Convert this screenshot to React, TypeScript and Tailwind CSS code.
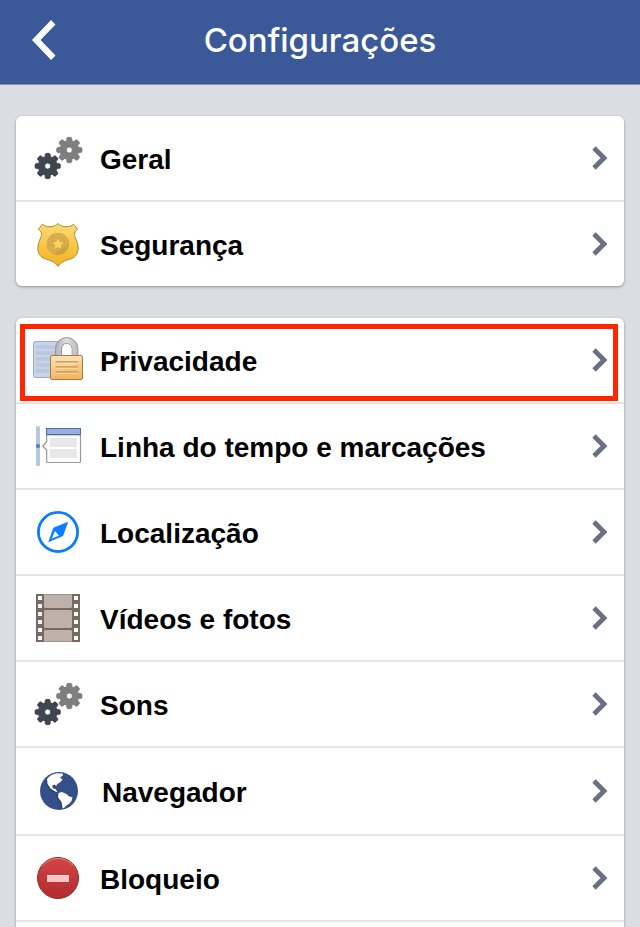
import type { ReactNode } from 'react'

interface SettingsItem {
  id: string
  label: string
  icon: ReactNode
  highlighted?: boolean
  wide?: boolean
}

const TEETH = [0, 45, 90, 135, 180, 225, 270, 315]

function Gear({ cx, cy, fill, edge }: { cx: number; cy: number; fill: string; edge: string }) {
  return (
    <g transform={`translate(${cx} ${cy})`}>
      {TEETH.map((a) => (
        <rect key={a} x="-2.600" y="-12.700" width="5.200" height="7" rx="1.600" fill={fill} stroke={edge} strokeWidth="0.600" transform={`rotate(${a})`} />
      ))}
      <circle r="6.500" fill="none" stroke={fill} strokeWidth="6.800" />
      <circle r="3.100" fill="none" stroke={edge} strokeWidth="0.800" />
    </g>
  )
}

function GearsIcon() {
  return (
    <svg viewBox="0 0 50 50" className="size-[50px]" aria-hidden="true">
      <Gear cx={36.3} cy={17} fill="#7f7f7f" edge="#666666" />
      <Gear cx={14.7} cy={33} fill="#3f4652" edge="#2b3039" />
    </svg>
  )
}

function BadgeIcon() {
  return (
    <svg viewBox="0 0 50 50" className="size-[50px]" aria-hidden="true">
      <defs>
        <linearGradient id="badge" x1="0" y1="0" x2="0" y2="1">
          <stop offset="0" stopColor="#fbdc72" />
          <stop offset="1" stopColor="#f4b121" />
        </linearGradient>
      </defs>
      <path
        d="M25 4.500C23 6.500 20 7.800 17 7.800C14 7.800 11.500 7 9.300 5.200L5.400 10.400C8.600 12 9.300 15.500 7.600 19C5.800 22.500 4.800 26 4.900 30C5 35.500 8.500 39 13.500 40.300C18.500 41.500 22.500 43.500 25 47.500C27.500 43.500 31.500 41.500 36.500 40.300C41.500 39 45 35.500 45.100 30C45.200 26 44.200 22.500 42.400 19C40.700 15.500 41.400 12 44.600 10.400L40.700 5.200C38.500 7 36 7.800 33 7.800C30 7.800 27 6.500 25 4.500Z"
        fill="url(#badge)"
        stroke="#b08a35"
        strokeWidth="1"
      />
      <circle cx="25" cy="25" r="11" fill="#cda139" />
      <path d="M25 14A11 11 0 0 1 36 25L20 35A11 11 0 0 1 25 14Z" fill="#d8ae4a" />
      <path d="M25 18.200L27 22.600L31.800 23.100L28.200 26.300L29.200 31L25 28.600L20.800 31L21.800 26.300L18.200 23.100L23 22.600Z" fill="#fbd15f" stroke="#b98f30" strokeWidth="0.500" />
    </svg>
  )
}

function PrivacyIcon() {
  return (
    <svg viewBox="0 0 50 50" className="size-[50px]" aria-hidden="true">
      <defs>
        <linearGradient id="lock" x1="0" y1="0" x2="0" y2="1">
          <stop offset="0" stopColor="#fde2b8" />
          <stop offset="1" stopColor="#f6b660" />
        </linearGradient>
        <linearGradient id="shackle" x1="0" y1="0" x2="1" y2="0">
          <stop offset="0" stopColor="#b3b3b3" />
          <stop offset="0.5" stopColor="#dddddd" />
          <stop offset="1" stopColor="#bcbcbc" />
        </linearGradient>
      </defs>
      <rect x="0.500" y="6.500" width="30" height="36" rx="2" fill="#cad3e8" stroke="#99a9d3" />
      {[10, 16, 22, 28, 34].map((y) => (
        <rect key={y} x="3" y={y} width="22" height="4" rx="1.500" fill="#bcc7e0" />
      ))}
      <path d="M22.500 21V13.700A11.200 11.200 0 0 1 44.900 13.700V21H38.900V13.700A5.200 5.200 0 0 0 28.500 13.700V21Z" fill="url(#shackle)" stroke="#8d8d8d" strokeWidth="0.900" />
      <path d="M29 20V13.700A4.700 4.700 0 0 1 38.400 13.700V20Z" fill="#ffffff" />
      <rect x="17.500" y="20.500" width="32" height="24" rx="1.500" fill="url(#lock)" stroke="#a97a40" />
      <path d="M18.500 44L48.500 25V42.500A1.500 1.500 0 0 1 47 44Z" fill="#f2a84a" opacity="0.200" />
      <path d="M22.500 27H45M22.500 32H45M22.500 37H45" stroke="#c3955a" strokeWidth="1.300" />
      <path d="M22.500 28.200H45M22.500 33.200H45M22.500 38.200H45" stroke="#fde3bb" strokeWidth="0.800" />
    </svg>
  )
}

function TimelineIcon() {
  return (
    <svg viewBox="0 0 50 50" className="size-[50px]" aria-hidden="true">
      <rect x="3" y="5" width="4" height="40" rx="1.500" fill="#b8c6e0" />
      <circle cx="5" cy="25" r="2.100" fill="#5b7cba" />
      <path d="M13.700 14V20.700L9.700 25L13.700 29.300V40.500A1 1 0 0 0 14.700 41.500H46.500A1 1 0 0 0 47.500 40.500V14Z" fill="#ffffff" stroke="#999999" strokeWidth="1.200" />
      <rect x="13.500" y="7.500" width="34" height="6" fill="#9ab0da" stroke="#4a6cb3" />
      <rect x="17" y="17" width="27" height="9" fill="#e8e8e8" />
      <rect x="17" y="28" width="27" height="9" fill="#e8e8e8" />
    </svg>
  )
}

function CompassIcon() {
  return (
    <svg viewBox="0 0 50 50" className="size-[50px]" aria-hidden="true">
      <circle cx="25" cy="25" r="19.600" fill="none" stroke="#0a7cff" strokeWidth="2.800" />
      <path d="M35.200 14.800L20.300 20.800L15.300 35.200L30 29Z" fill="#0a7cff" />
      <path d="M21.900 24L18.800 31.700L26 28.600Z" fill="#ffffff" />
    </svg>
  )
}

function FilmIcon() {
  return (
    <svg viewBox="0 0 50 50" className="size-[50px]" aria-hidden="true">
      <rect x="3" y="1" width="44" height="48" fill="#786860" />
      <rect x="11" y="1" width="28" height="48" fill="#bdb1a8" />
      <path d="M11 1.500H39M11 48.500H39" stroke="#9f948c" strokeWidth="1" />
      <path d="M11 14L12 15H38L39 14V18L38 17H12L11 18ZM11 34L12 35H38L39 34V38L38 37H12L11 38Z" fill="#786860" />
      {[3, 11, 19, 27, 35, 43].map((y) => (
        <g key={y} fill="#ffffff">
          <rect x="5" y={y} width="4" height="4" />
          <rect x="41" y={y} width="4" height="4" />
        </g>
      ))}
    </svg>
  )
}

function GlobeIcon() {
  return (
    <svg viewBox="0 0 50 50" className="size-[50px]" aria-hidden="true">
      <circle cx="26" cy="25" r="19" fill="#354f8a" />
      {/* land shadow, then the land itself */}
      <g fill="#1f3363" transform="translate(-0.800 0.800)">
        <path d="M14 13C16.500 9.800 20 7.800 23.500 7.300L29.500 7.500L30 9.500L27 11.500L29.500 13.500L27.500 16L24.500 18L23 20L21.500 18.500L19 20L20 22.500L22.500 23L24.500 26L22 25.500L17.500 22.500L14.500 18Z" />
        <path d="M25.500 27L29 26L33.500 28L35.500 30L39.500 31.500L38.500 35L36.500 37.500L33.500 39.500L31 42L29.500 42.500L28.500 36L25 31.500Z" />
      </g>
      <g fill="#ffffff">
        <path d="M14 13C16.500 9.800 20 7.800 23.500 7.300L29.500 7.500L30 9.500L27 11.500L29.500 13.500L27.500 16L24.500 18L23 20L21.500 18.500L19 20L20 22.500L22.500 23L24.500 26L22 25.500L17.500 22.500L14.500 18Z" />
        <path d="M25.500 27L29 26L33.500 28L35.500 30L39.500 31.500L38.500 35L36.500 37.500L33.500 39.500L31 42L29.500 42.500L28.500 36L25 31.500Z" />
      </g>
    </svg>
  )
}

function BlockIcon() {
  return (
    <svg viewBox="0 0 50 50" className="size-[50px]" aria-hidden="true">
      <defs>
        <linearGradient id="block" x1="0" y1="0" x2="0" y2="1">
          <stop offset="0" stopColor="#d34545" />
          <stop offset="1" stopColor="#b02c2f" />
        </linearGradient>
      </defs>
      <circle cx="25" cy="25" r="20.500" fill="url(#block)" stroke="#9c2b2b" />
      <path d="M10 12.500A19.500 19.500 0 0 1 40 12.500" fill="none" stroke="#e88080" strokeWidth="1" />
      <rect x="14" y="22" width="22" height="7" fill="#f9c4c4" />
      <rect x="14" y="22" width="22" height="1" fill="#ffe4e4" />
    </svg>
  )
}

const GROUPS: SettingsItem[][] = [
  [
    { id: 'geral', label: 'Geral', icon: <GearsIcon /> },
    { id: 'seguranca', label: 'Segurança', icon: <BadgeIcon /> },
  ],
  [
    { id: 'privacidade', label: 'Privacidade', icon: <PrivacyIcon />, highlighted: true },
    { id: 'linha-do-tempo', label: 'Linha do tempo e marcações', icon: <TimelineIcon /> },
    { id: 'localizacao', label: 'Localização', icon: <CompassIcon /> },
    { id: 'videos', label: 'Vídeos e fotos', icon: <FilmIcon /> },
    { id: 'sons', label: 'Sons', icon: <GearsIcon /> },
    { id: 'navegador', label: 'Navegador', icon: <GlobeIcon />, wide: true },
    { id: 'bloqueio', label: 'Bloqueio', icon: <BlockIcon /> },
  ],
]

function SettingsRow({ item, last }: { item: SettingsItem; last: boolean }) {
  return (
    <li className={last ? 'relative' : 'relative border-b-2 border-[#e5e5e6]'}>
      <a
        href={`#${item.id}`}
        className={`flex items-center pl-[17px] pr-4 ${item.wide ? 'h-[86px] gap-[19px]' : 'h-[84px] gap-[17px]'}`}
      >
        {item.icon}
        <span className="flex-1 pt-1 text-[28px] leading-8 font-bold text-black">{item.label}</span>
        <svg viewBox="0 0 16 26" className="h-[26px] w-4" aria-hidden="true">
          <path d="M2 3L12 13L2 23" fill="none" stroke="#687082" strokeWidth="4.800" />
        </svg>
      </a>
      {item.highlighted && (
        <div className="pointer-events-none absolute top-1.5 right-1.5 bottom-px left-1 border-5 border-[#ff2600]" />
      )}
    </li>
  )
}

export default function App() {
  return (
    <div className="flex min-h-screen flex-col bg-[#dcdde2] font-['Liberation_Sans',Arial,sans-serif]">
      <header className="grid h-[85px] grid-cols-[80px_1fr_80px] items-center border-b border-[#8e939f] bg-[#3b5998] pb-1">
        <button type="button" aria-label="Voltar" className="flex h-full items-center pl-8">
          <svg viewBox="0 0 24 40" className="h-10 w-6" aria-hidden="true">
            <path d="M0 20L19 0L23.500 4.500L8.500 20L23.500 35.500L19 40Z" fill="#ffffff" />
          </svg>
        </button>
        <h1 className="text-center font-['Inter',sans-serif] text-[33px] leading-10 font-medium text-white">
          Configurações
        </h1>
      </header>
      <main className="flex flex-1 flex-col gap-8 px-4 pt-[31px]">
        {GROUPS.map((items, i) => {
          const isLastGroup = i === GROUPS.length - 1
          return (
            <ul
              key={items[0].id}
              className={`bg-white shadow-[0_1px_3px_rgba(0,0,0,0.35)] ${isLastGroup ? 'flex-1 rounded-t-md' : 'rounded-md'}`}
            >
              {items.map((item, j) => (
                <SettingsRow key={item.id} item={item} last={!isLastGroup && j === items.length - 1} />
              ))}
            </ul>
          )
        })}
      </main>
    </div>
  )
}
